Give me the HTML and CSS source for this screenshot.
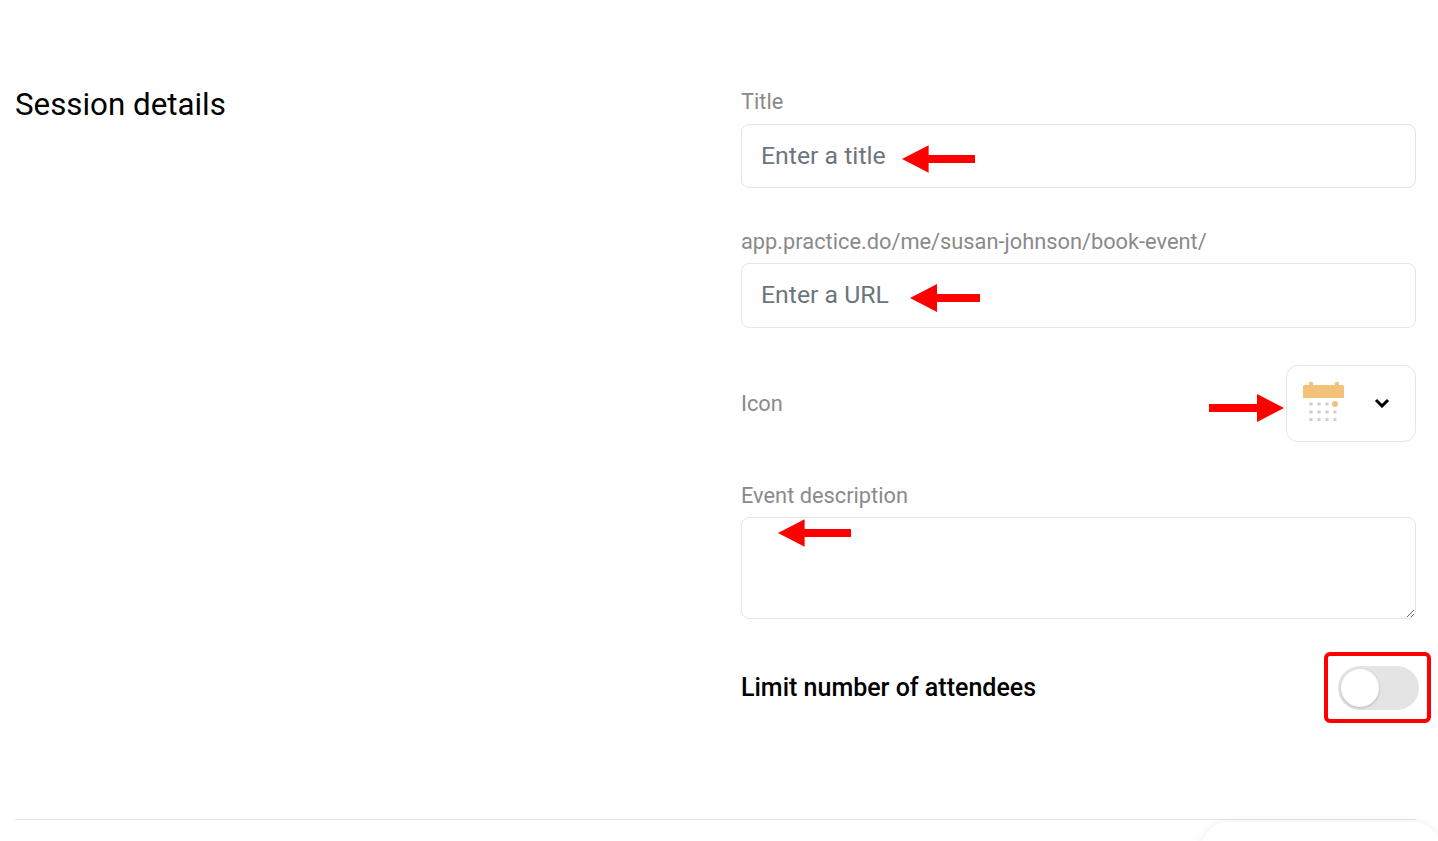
FILE: index.html
```html
<!DOCTYPE html>
<html lang="en">
<head>
<meta charset="utf-8">
<title>Session details</title>
<link rel="stylesheet" href="styles.css">
</head>
<body>
<div class="viewport">
<main class="page">
  <section class="details">
    <h2 class="heading">Session details</h2>
    <form class="form">
      <div class="field field-title">
        <label class="label" for="title">Title</label>
        <input class="input" id="title" type="text" placeholder="Enter a title">
        <svg class="arrow arrow-title" viewBox="0 0 74 28" aria-hidden="true"><path d="M0 14 27 0V10H74V18H27V28Z"/></svg>
      </div>
      <div class="field field-url">
        <label class="label" for="url">app.practice.do/me/susan-johnson/book-event/</label>
        <input class="input" id="url" type="text" placeholder="Enter a URL">
        <svg class="arrow arrow-url" viewBox="0 0 70 28" aria-hidden="true"><path d="M0 14 27 0V10H70V18H27V28Z"/></svg>
      </div>
      <div class="icon-row">
        <span class="label label-inline">Icon</span>
        <svg class="arrow arrow-icon" viewBox="0 0 75 28" aria-hidden="true"><path d="M75 14 48 0V10H0V18H48V28Z"/></svg>
        <button class="icon-select" type="button" aria-label="Icon">
          <svg class="calendar" width="42" height="42" viewBox="0 0 42 42" aria-hidden="true">
            <path class="cal-fill" d="M0 4.500a1.500 1.500 0 0 1 1.500-1.500H6V1.500a2 2 0 0 1 4 0V3H32V1.500a2 2 0 0 1 4 0V3h3.500A1.500 1.500 0 0 1 41 4.500V16H0Z"/>
            <circle class="cal-fill" cx="32" cy="22" r="3"/>
            <g class="cal-dots">
              <rect x="6.500" y="20.500" width="3" height="3"/><rect x="14.500" y="20.500" width="3" height="3"/><rect x="22.500" y="20.500" width="3" height="3"/>
              <rect x="6.500" y="28.500" width="3" height="3"/><rect x="14.500" y="28.500" width="3" height="3"/><rect x="22.500" y="28.500" width="3" height="3"/><rect x="30.500" y="28.500" width="3" height="3"/>
              <rect x="6.500" y="36" width="3" height="3"/><rect x="14.500" y="36" width="3" height="3"/><rect x="22.500" y="36" width="3" height="3"/><rect x="30.500" y="36" width="3" height="3"/>
            </g>
          </svg>
          <svg class="chevron" width="16" height="10" viewBox="0 0 16 10" aria-hidden="true"><path d="M2 2l6 6 6-6"/></svg>
        </button>
      </div>
      <div class="field field-desc">
        <label class="label" for="desc">Event description</label>
        <textarea class="textarea" id="desc"></textarea>
        <svg class="arrow arrow-desc" viewBox="0 0 74 28" aria-hidden="true"><path d="M0 14 27 0V10H74V18H27V28Z"/></svg>
      </div>
      <div class="limit-row">
        <span class="limit-label">Limit number of attendees</span>
        <span class="toggle-box"><span class="toggle"><span class="knob"></span></span></span>
      </div>
    </form>
  </section>
  <hr class="divider">
</main>
<div class="floating-card"></div>
</div>
</body>
</html>
```
FILE: styles.css
```css
* { box-sizing: border-box; }
html, body { height: 100%; }
body {
  margin: 0;
  background: #fff;
  font-family: Roboto, "Liberation Sans", sans-serif;
  color: #000;
}
.viewport {
  position: relative;
  height: 100vh;
  overflow: hidden;
}
.page { padding: 84px 22px 0 15px; }
.details {
  display: grid;
  grid-template-columns: 726px 675px;
}
.heading {
  margin: 0;
  font-size: 31.300px;
  font-weight: 400;
  line-height: 41px;
}
.form { display: flex; flex-direction: column; }
.field { position: relative; }
.label {
  display: block;
  font-size: 21.800px;
  line-height: 26px;
  color: #8a8a8a;
}
.input, .textarea {
  display: block;
  width: 100%;
  border: 1px solid #e6e6e6;
  border-radius: 8px;
  background: #fff;
  padding: 0 19px;
  font: 400 24.800px Roboto, sans-serif;
  color: #6c757d;
  outline: 0;
}
.input::placeholder { color: #6c757d; opacity: 1; }
.field-title .label { margin: 5px 0 9px; }
.input { height: 64px; padding-bottom: 2px; }
.field-url { margin-top: 41px; }
.field-url .label { margin-bottom: 8px; }
.field-url .input { height: 65px; }
.icon-row {
  position: relative;
  margin-top: 37px;
  display: flex;
  align-items: center;
  justify-content: space-between;
}
.label-inline { padding-top: 1px; }
.icon-select {
  width: 130px;
  height: 77px;
  padding: 0 25px 0 16px;
  display: flex;
  align-items: center;
  justify-content: space-between;
  background: #fff;
  border: 1px solid #e6e6e6;
  border-radius: 12px;
}
.calendar { margin-top: -2px; }
.cal-fill { fill: #f2c27b; }
.cal-dots { fill: #cfcfcf; }
.chevron { fill: none; stroke: #000; stroke-width: 3; margin-top: -2px; }
.field-desc { margin-top: 41px; }
.field-desc .label { margin-bottom: 8px; }
.textarea { height: 102px; resize: vertical; padding: 10px 19px; }
.limit-row {
  margin-top: 33px;
  height: 71px;
  display: flex;
  align-items: center;
  justify-content: space-between;
  position: relative;
}
.limit-label { font-size: 25px; font-weight: 500; }
.toggle-box {
  position: absolute;
  right: -15px;
  top: 0;
  width: 107px;
  height: 71px;
  border: 4px solid #f00;
  border-radius: 6px;
  padding: 10px;
  display: flex;
  justify-content: flex-end;
}
.toggle {
  display: block;
  position: relative;
  width: 81px;
  height: 44px;
  margin-right: -2px;
  border-radius: 22px;
  background: #e4e4e4;
}
.knob {
  position: absolute;
  left: 3px;
  top: 3px;
  width: 38px;
  height: 38px;
  border-radius: 50%;
  background: #fff;
  box-shadow: 0 1px 3px rgba(0, 0, 0, .2);
}
.arrow { position: absolute; fill: #f00; height: 28px; }
.arrow-title { left: 161px; top: 61px; width: 73px; }
.arrow-url { left: 169px; top: 55px; width: 70px; }
.arrow-icon { right: 132px; top: 29px; width: 75px; }
.arrow-desc { left: 37px; top: 36px; width: 73px; }
.divider {
  margin: 96px 0 0;
  border: 0;
  border-top: 1px solid #e6e6e6;
}
.floating-card {
  position: absolute;
  left: 1200px;
  top: 822px;
  width: 242px;
  height: 120px;
  border-radius: 30px;
  background: #fff;
  box-shadow: 0 0 10px rgba(0, 0, 0, .07);
}
```
